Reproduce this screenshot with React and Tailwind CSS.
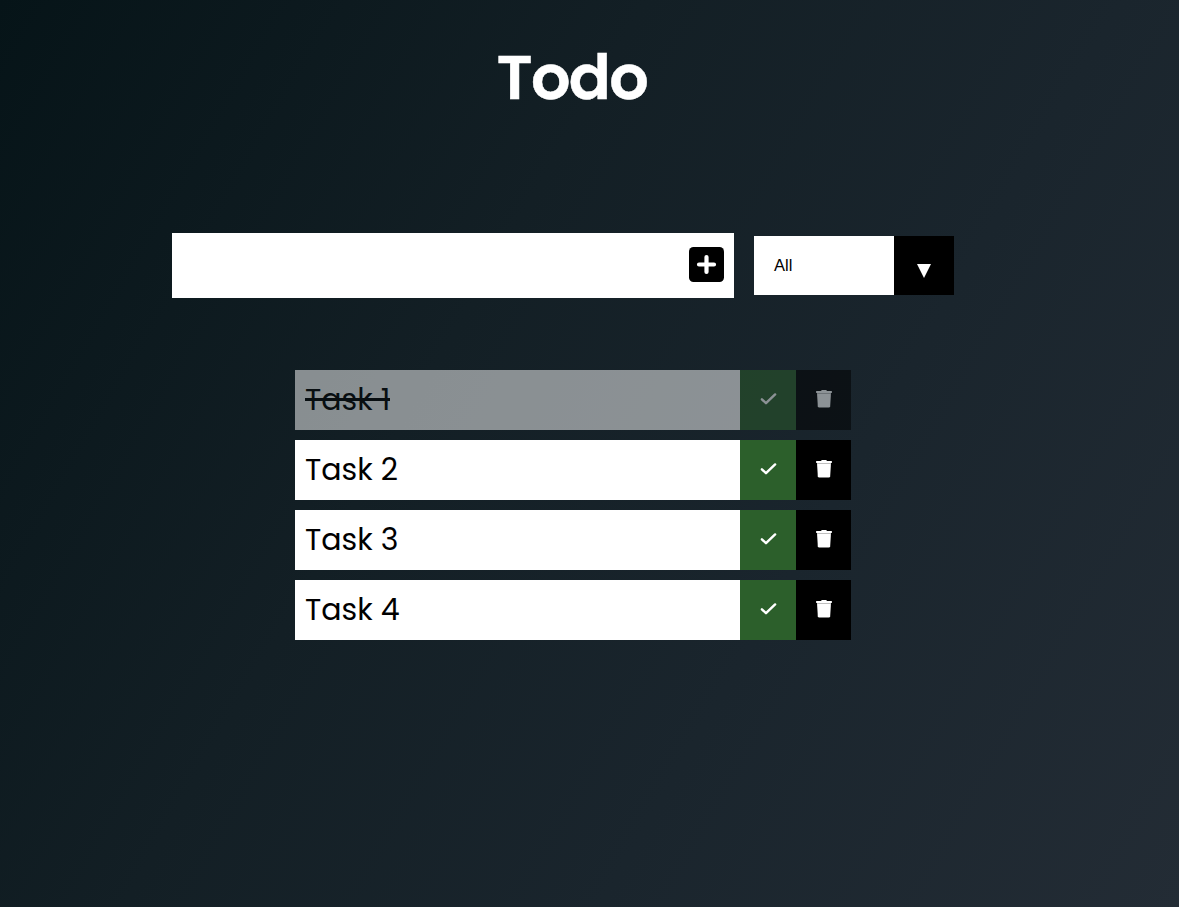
import { useState } from "react";

const initialTasks = [
  { id: 1, title: "Task 1", completed: true },
  { id: 2, title: "Task 2", completed: false },
  { id: 3, title: "Task 3", completed: false },
  { id: 4, title: "Task 4", completed: false },
];

function CheckIcon() {
  return (
    <svg viewBox="0 0 17 12" className="ml-[1px] h-3 w-[17px] fill-none stroke-current">
      <path d="M1.900 6.300L6 10.200L15.100 1.400" strokeWidth="2.400" strokeLinecap="round" strokeLinejoin="round" />
    </svg>
  );
}

function TrashIcon() {
  return (
    <svg viewBox="0 0 16 18" className="ml-[1px] h-[18px] w-4 fill-current">
      <path d="M5.300 0.500Q5.500 0 6 0H10Q10.500 0 10.700 0.500L11 1H15.300Q16 1 16 1.700V2.300Q16 3 15.300 3H0.700Q0 3 0 2.300V1.700Q0 1 0.700 1H5z" />
      <path d="M1 3H15V4H1z" opacity="0.75" />
      <path d="M1.100 4H14.900L14.200 16.200Q14.100 17.600 12.700 17.600H3.300Q1.900 17.600 1.800 16.200z" />
    </svg>
  );
}

function SquarePlusIcon() {
  return (
    <svg viewBox="0 0 35 35" className="block h-[35px] w-[35px]">
      <rect width="35" height="35" rx="4.500" className="fill-black" />
      <path d="M17.500 10v15M10 17.500h15" className="stroke-white" strokeWidth="4.200" strokeLinecap="round" />
    </svg>
  );
}

function TaskRow({ task, onToggle, onDelete }) {
  return (
    <li className={`flex h-[60px] w-[556px] ${task.completed ? "opacity-50" : ""}`}>
      <div className="flex w-[445px] items-center bg-white pl-[10px] text-black">
        <span
          className={`relative whitespace-pre text-[30px] leading-[30px] ${
            task.completed ? "after:absolute after:left-0 after:top-[13px] after:h-[3px] after:w-[85px] after:bg-black" : ""
          }`}
        >
          {task.title}
        </span>
      </div>
      <button onClick={onToggle} aria-label="Complete" className="flex w-14 items-center justify-center bg-[#2c5f2b] pb-[2px] text-white">
        <CheckIcon />
      </button>
      <button onClick={onDelete} aria-label="Delete" className="flex w-[55px] items-center justify-center bg-black pb-[2px] text-white">
        <TrashIcon />
      </button>
    </li>
  );
}

export default function App() {
  const [tasks, setTasks] = useState(initialTasks);
  const [text, setText] = useState("");

  const toggle = (id) => setTasks(tasks.map((t) => (t.id === id ? { ...t, completed: !t.completed } : t)));
  const remove = (id) => setTasks(tasks.filter((t) => t.id !== id));
  const add = (e) => {
    e.preventDefault();
    if (!text.trim()) return;
    setTasks([...tasks, { id: Date.now(), title: text, completed: false }]);
    setText("");
  };

  return (
    <div className="min-h-screen bg-[linear-gradient(120deg,#061418,#131f25_38%,#1a252d_66%,#232c35)] font-[Poppins,Inter,sans-serif]">
      <header className="flex h-[233px] justify-center pr-[35px] pt-[46px]">
        <h1 className="text-[62px] font-semibold leading-[64px] tracking-[-1.600px] text-white [-webkit-text-stroke:0.500px_white]">Todo</h1>
      </header>
      <form onSubmit={add} className="flex items-center gap-5 pl-[172px]">
        <div className="flex h-[65px] w-[562px] items-center bg-white pb-[3px] pr-[10px]">
          <input value={text} onChange={(e) => setText(e.target.value)} className="h-full min-w-0 flex-1 px-3 text-3xl text-black outline-none" />
          <button aria-label="Add task">
            <SquarePlusIcon />
          </button>
        </div>
        <div className="flex h-[59px] w-[200px]">
          <div className="flex w-[140px] items-center bg-white pl-5 font-['Liberation_Sans',Arial,sans-serif] text-[16.500px] text-black">All</div>
          <div className="flex w-[60px] items-center justify-center bg-black pt-[10px]">
            <svg viewBox="0 0 14 14" className="h-[14px] w-[14px] fill-white">
              <path d="M0 0h14L7 14z" />
            </svg>
          </div>
        </div>
      </form>
      <ul className="flex flex-col gap-[10px] pl-[295px] pt-[72px]">
        {tasks.map((task) => (
          <TaskRow key={task.id} task={task} onToggle={() => toggle(task.id)} onDelete={() => remove(task.id)} />
        ))}
      </ul>
    </div>
  );
}
